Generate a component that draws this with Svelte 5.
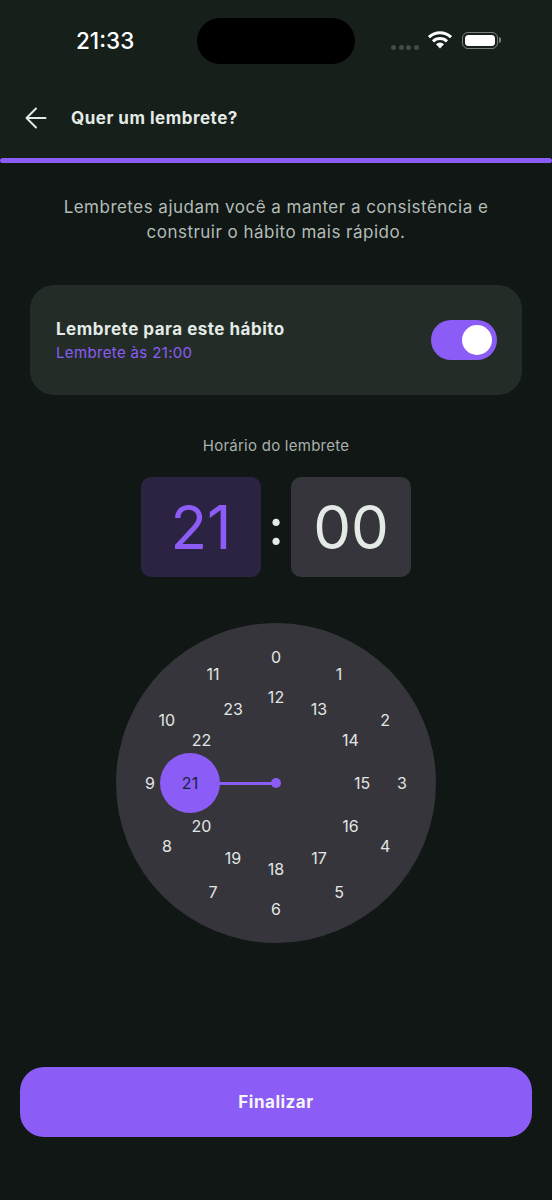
<script lang="ts">
	const outer = Array.from({ length: 12 }, (_, i) => i);
	const inner = Array.from({ length: 12 }, (_, i) => i + 12);
	const selected = 21;

	// dial is 320 across, centre 160,160
	function pos(hour: number) {
		const radius = hour < 12 ? 126 : 86;
		const angle = ((hour % 12) / 12) * Math.PI * 2;
		const x = 160 + radius * Math.sin(angle);
		const y = 160 - radius * Math.cos(angle);
		return `left: ${x.toFixed(1)}px; top: ${y.toFixed(1)}px`;
	}
</script>

<div class="page">
	<div class="statusbar">
		<span class="time">21:33</span>
		<div class="island"></div>
		<div class="status-icons">
			<div class="signal"><i></i><i></i><i></i><i></i></div>
			<svg class="wifi" width="24" height="18" viewBox="0 0 24 18" aria-hidden="true">
				<path d="M12 17.500 8 13.200a5.800 5.800 0 0 1 8 0Z" fill="#fff" />
				<path d="M5 10.400a10 10 0 0 1 14 0" fill="none" stroke="#fff" stroke-width="3" />
				<path d="M1 6.200a15.900 15.900 0 0 1 22 0" fill="none" stroke="#fff" stroke-width="3" />
			</svg>
			<div class="battery"><div class="battery-fill"></div></div>
			<div class="battery-tip"></div>
		</div>
	</div>

	<header class="topbar">
		<svg width="24" height="24" viewBox="0 0 24 24" fill="none" stroke="#e4ebe6" stroke-width="2" stroke-linecap="round" stroke-linejoin="round" aria-hidden="true">
			<path d="M21.500 12H2.500M12 2.500 2.500 12l9.500 9.500" />
		</svg>
		<h1>Quer um lembrete?</h1>
	</header>

	<div class="progress"></div>

	<main>
		<p class="intro">Lembretes ajudam você a manter a consistência e construir o hábito mais rápido.</p>

		<section class="card">
			<div>
				<p class="card-title">Lembrete para este hábito</p>
				<p class="card-sub">Lembrete às 21:00</p>
			</div>
			<div class="toggle"><div class="knob"></div></div>
		</section>

		<p class="time-label">Horário do lembrete</p>

		<div class="time-row">
			<div class="time-box active">21</div>
			<div class="colon">:</div>
			<div class="time-box">00</div>
		</div>

		<div class="dial">
			<div class="hand"></div>
			<div class="pivot"></div>
			<div class="thumb"></div>
			{#each [...outer, ...inner] as hour}
				<span class="num" class:selected={hour === selected} style={pos(hour)}>{hour}</span>
			{/each}
		</div>

		<button type="button" class="finish">Finalizar</button>
	</main>
</div>

<style>
	:global(body) {
		margin: 0;
		background: #101715;
		font-family: Inter, 'Noto Sans', sans-serif;
	}

	.page {
		height: 1200px;
		overflow: hidden;
		background: #101715;
		color: #e4ebe6;
	}

	.statusbar {
		position: relative;
		display: flex;
		align-items: center;
		height: 80px;
		background: #171f1b;
	}

	.time {
		margin-left: 76px;
		color: #fff;
		font-size: 22.5px;
		font-weight: 500;
	}

	.island {
		position: absolute;
		left: 197px;
		top: 18px;
		width: 158px;
		height: 46px;
		border-radius: 23px;
		background: #000;
	}

	.status-icons {
		position: absolute;
		left: 391px;
		top: 29px;
		display: flex;
		align-items: center;
		height: 22px;
	}

	.signal {
		display: flex;
		gap: 2.6px;
		margin-top: 14px;
		margin-right: 9px;
	}

	.signal i {
		width: 5px;
		height: 5px;
		border-radius: 50%;
		background: #454a47;
	}

	.wifi {
		margin-right: 10px;
	}

	.battery {
		box-sizing: border-box;
		width: 36px;
		height: 17px;
		padding: 2px;
		border: 1.5px solid #7b807d;
		border-radius: 6px;
	}

	.battery-fill {
		height: 100%;
		border-radius: 3.5px;
		background: #fff;
	}

	.battery-tip {
		width: 2px;
		height: 6px;
		margin-left: 1px;
		border-radius: 0 2px 2px 0;
		background: #7b807d;
	}

	.topbar {
		box-sizing: border-box;
		display: flex;
		align-items: center;
		gap: 23px;
		height: 78px;
		padding: 0 0 2px 24px;
		background: #171f1b;
	}

	h1 {
		margin: 0;
		font-size: 17px;
		font-weight: 700;
		letter-spacing: 0.5px;
	}

	.progress {
		height: 5px;
		border-radius: 3px;
		background: #8b5cf6;
	}

	main {
		display: flex;
		flex-direction: column;
		align-items: center;
	}

	.intro {
		width: 470px;
		margin: 32px 0 0;
		color: #b4bcb7;
		font-size: 17px;
		line-height: 25px;
		letter-spacing: 0.48px;
		text-align: center;
	}

	.card {
		box-sizing: border-box;
		display: flex;
		align-items: center;
		justify-content: space-between;
		width: 492px;
		height: 110px;
		margin-top: 40px;
		padding: 0 25px 0 26px;
		border-radius: 24px;
		background: #232c27;
	}

	.card-title {
		margin: 0;
		font-size: 17px;
		font-weight: 700;
		line-height: 22px;
		letter-spacing: 0.5px;
	}

	.card-sub {
		margin: 3px 0 0;
		color: #8b5cf6;
		font-size: 15px;
		line-height: 20px;
		letter-spacing: 0.35px;
	}

	.toggle {
		box-sizing: border-box;
		display: flex;
		justify-content: flex-end;
		align-items: center;
		width: 66px;
		height: 40px;
		padding-right: 5px;
		border-radius: 20px;
		background: #8b5cf6;
	}

	.knob {
		width: 30px;
		height: 30px;
		border-radius: 50%;
		background: #fff;
	}

	.time-label {
		margin: 41px 0 0;
		color: #a9b0ac;
		font-size: 15px;
		line-height: 20px;
		letter-spacing: 0.25px;
	}

	.time-row {
		display: flex;
		align-items: center;
		margin-top: 21px;
	}

	.time-box {
		width: 120px;
		height: 100px;
		border-radius: 10px;
		background: #36353b;
		font-size: 60px;
		font-weight: 400;
		line-height: 100px;
		text-align: center;
	}

	.time-box.active {
		background: #2c2342;
		color: #8b5cf6;
	}

	.colon {
		width: 30px;
		font-size: 50px;
		font-weight: 500;
		line-height: 100px;
		text-align: center;
	}

	.dial {
		position: relative;
		width: 320px;
		height: 320px;
		margin-top: 46px;
		border-radius: 50%;
		background: #36353b;
	}

	.num {
		position: absolute;
		transform: translate(-50%, -50%);
		color: #e2e6e3;
		font-size: 16px;
		line-height: 20px;
	}

	.num.selected {
		color: #14243a;
	}

	.hand {
		position: absolute;
		left: 74px;
		top: 158.500px;
		width: 86px;
		height: 3px;
		background: #8b5cf6;
	}

	.pivot {
		position: absolute;
		left: 155px;
		top: 155px;
		width: 10px;
		height: 10px;
		border-radius: 50%;
		background: #8b5cf6;
	}

	.thumb {
		position: absolute;
		left: 44px;
		top: 130px;
		width: 60px;
		height: 60px;
		border-radius: 50%;
		background: #8b5cf6;
	}

	.finish {
		width: 512px;
		height: 70px;
		margin-top: 124px;
		border: 0;
		border-radius: 24px;
		background: #8b5cf6;
		color: #f4f6f5;
		font: inherit;
		font-size: 17px;
		font-weight: 700;
		letter-spacing: 0.5px;
	}
</style>
